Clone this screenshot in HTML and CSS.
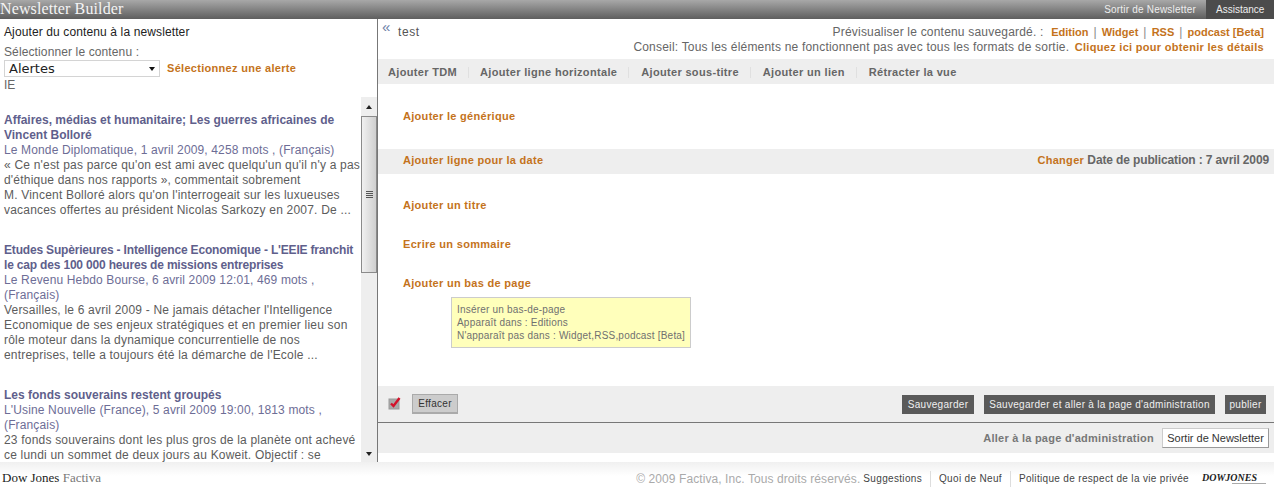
FILE: index.html
```html
<!DOCTYPE html>
<html lang="fr">
<head>
<meta charset="utf-8">
<title>Newsletter Builder</title>
<link rel="stylesheet" href="styles.css">
</head>
<body>
<header class="top">
  <div class="brand">Newsletter Builder</div>
  <nav class="top-nav"><a class="top-exit">Sortir de Newsletter</a><a class="top-help">Assistance</a></nav>
</header>
<main class="main">
  <aside class="left">
    <h1 class="left-title">Ajouter du contenu à la newsletter</h1>
    <div class="left-label">Sélectionner le contenu :</div>
    <div class="select-row">
      <div class="select"><span>Alertes</span><i class="arrow"></i></div>
      <a class="link">Sélectionnez une alerte</a>
    </div>
    <div class="ie">IE</div>
    <div class="list-wrap">
      <div class="list">
        <article class="art">
          <a class="art-title">Affaires, médias et humanitaire; Les guerres africaines de Vincent Bolloré</a>
          <div class="art-meta">Le Monde Diplomatique, 1 avril 2009, 4258 mots , (Français)</div>
          <p class="art-text">« Ce n'est pas parce qu'on est ami avec quelqu'un qu'il n'y a pas d'éthique dans nos rapports », commentait sobrement<br>M. Vincent Bolloré alors qu'on l'interrogeait sur les luxueuses vacances offertes au président Nicolas Sarkozy en 2007. De ...</p>
        </article>
        <article class="art">
          <a class="art-title tight">Etudes Supèrieures - Intelligence Economique - L'EEIE franchit le cap des 100 000 heures de missions entreprises</a>
          <div class="art-meta">Le Revenu Hebdo Bourse, 6 avril 2009 12:01, 469 mots , (Français)</div>
          <p class="art-text">Versailles, le 6 avril 2009 - Ne jamais détacher l'Intelligence Economique de ses enjeux stratégiques et en premier lieu son rôle moteur dans la dynamique concurrentielle de nos entreprises, telle a toujours été la démarche de l'Ecole ...</p>
        </article>
        <article class="art">
          <a class="art-title">Les fonds souverains restent groupés</a>
          <div class="art-meta">L'Usine Nouvelle (France), 5 avril 2009 19:00, 1813 mots , (Français)</div>
          <p class="art-text">23 fonds souverains dont les plus gros de la planète ont achevé ce lundi un sommet de deux jours au Koweit. Objectif : se</p>
        </article>
      </div>
      <div class="scrollbar">
        <div class="sb-btn"><i class="sb-up"></i></div>
        <div class="sb-track">
          <div class="sb-thumb"><i class="sb-grip"></i></div>
        </div>
        <div class="sb-btn sb-btn-end"><i class="sb-down"></i></div>
      </div>
    </div>
  </aside>
  <section class="right">
    <div class="head">
      <div class="head-left"><span class="collapse">«</span><span class="name">test</span></div>
      <div class="head-right">
        <div>Prévisualiser le contenu sauvegardé. : <span class="links"><a class="link">Edition</a><span class="pipe">|</span><a class="link">Widget</a><span class="pipe">|</span><a class="link">RSS</a><span class="pipe">|</span><a class="link">podcast [Beta]</a></span></div>
        <div>Conseil: Tous les éléments ne fonctionnent pas avec tous les formats de sortie. <a class="link tip">Cliquez ici pour obtenir les détails</a></div>
      </div>
    </div>
    <div class="toolbar">
      <a class="tool">Ajouter TDM</a>
      <a class="tool">Ajouter ligne horizontale</a>
      <a class="tool">Ajouter sous-titre</a>
      <a class="tool">Ajouter un lien</a>
      <a class="tool">Rétracter la vue</a>
    </div>
    <div class="canvas">
      <div class="sec sec-generic"><a class="link">Ajouter le générique</a></div>
      <div class="date-row">
        <a class="link">Ajouter ligne pour la date</a>
        <div class="date"><a class="link">Changer</a> Date de publication : 7 avril 2009</div>
      </div>
      <div class="sec sec-title"><a class="link">Ajouter un titre</a></div>
      <div class="sec"><a class="link">Ecrire un sommaire</a></div>
      <div class="sec"><a class="link">Ajouter un bas de page</a></div>
      <div class="tooltip">Insérer un bas-de-page<br>Apparaît dans : Editions<br>N'apparaît pas dans : Widget,RSS,podcast [Beta]</div>
    </div>
    <div class="actions">
      <svg class="check" width="14" height="14" viewBox="0 0 14 14"><rect x="1" y="3" width="10" height="10" fill="#a9a9a9" stroke="#999"/><path d="M3 7.5 L5.5 10 L11.5 2" fill="none" stroke="#d3122a" stroke-width="2.4"/></svg>
      <button class="btn-light" type="button">Effacer</button>
      <div class="actions-right">
        <button class="btn-dark btn-save" type="button">Sauvegarder</button>
        <button class="btn-dark btn-save-admin" type="button">Sauvegarder et aller à la page d'administration</button>
        <button class="btn-dark btn-publish" type="button">publier</button>
      </div>
    </div>
    <div class="admin">
      <a class="admin-link">Aller à la page d'administration</a>
      <button class="btn-white" type="button">Sortir de Newsletter</button>
    </div>
  </section>
</main>
<footer class="foot">
  <div class="foot-brand">Dow Jones <span>Factiva</span></div>
  <div class="foot-right">
    <span class="copy">© 2009 Factiva, Inc. Tous droits réservés.</span>
    <a class="foot-link">Suggestions</a><a class="foot-link sep">Quoi de Neuf</a><a class="foot-link sep">Politique de respect de la vie privée</a>
    <span class="dj">DOWJONES</span>
  </div>
</footer>
</body>
</html>
```
FILE: styles.css
```css
* { box-sizing: border-box; }
html, body { margin: 0; padding: 0; }
body { width: 1274px; height: 500px; overflow: hidden; background: #fff; font: 12px/15px "Liberation Sans", Arial, sans-serif; color: #666; }
a { text-decoration: none; }
p, h1 { margin: 0; font: inherit; }

.top { height: 19px; display: flex; justify-content: space-between; background: linear-gradient(#a8a8a8, #5e5e5e); }
.brand { font: 16px/17px "Liberation Serif", serif; color: #f4f4f4; letter-spacing: 0.12px; }
.top-nav { display: flex; font-size: 10px; line-height: 20px; color: #eee; }
.top-exit { padding-right: 10px; letter-spacing: 0.2px; }
.top-help { width: 68px; padding-left: 10px; background: #4c4c4c; }

.main { display: flex; height: 443px; }
.left { width: 378px; flex: none; border-right: 1px solid #777; display: flex; flex-direction: column; }
.left-title { color: #222; padding: 6px 0 0 4px; height: 25px; letter-spacing: 0.12px; }
.left-label { padding-left: 4px; height: 16px; line-height: 16px; letter-spacing: 0.12px; }
.select-row { display: flex; align-items: center; height: 17px; padding-left: 4px; }
.select { width: 156px; height: 17px; border: 1px solid #d4d4d4; display: flex; align-items: center; justify-content: space-between; padding: 0 4px; font: 13px/15px "DejaVu Sans", sans-serif; color: #222; }
.arrow { width: 0; height: 0; border: 3.5px solid transparent; border-top: 4px solid #111; border-bottom: 0; }
.link { color: #c4731c; font-weight: bold; font-size: 11px; letter-spacing: 0.3px; }
.select-row .link { margin-left: 7px; }
.ie { height: 20px; padding: 1px 0 0 4px; line-height: 14px; }
.list-wrap { flex: 1; min-height: 0; display: flex; }
.list { flex: 1; min-width: 0; overflow: hidden; padding: 16px 0 0 4px; }
.art { margin-bottom: 25px; width: 357px; }
.art-title { display: block; font-weight: bold; color: #5f5f8c; }
.tight { letter-spacing: -0.18px; }
.art-meta { color: #6d6d96; letter-spacing: 0.14px; }
.art-text { color: #5c5c5c; letter-spacing: 0.2px; }
.scrollbar { width: 16px; flex: none; display: flex; flex-direction: column; background: #eee; }
.sb-btn { height: 19px; flex: none; display: flex; align-items: center; justify-content: center; }
.sb-btn-end { height: 17px; }
.sb-up { border: 3.5px solid transparent; border-bottom: 4px solid #222; border-top: 0; }
.sb-down { border: 3.5px solid transparent; border-top: 4px solid #222; border-bottom: 0; }
.sb-track { flex: 1; }
.sb-thumb { height: 157px; border: 1px solid #8a8a8a; background: linear-gradient(90deg, #f0f0f0, #cfcfcf); display: flex; align-items: center; justify-content: center; }
.sb-grip { width: 7px; height: 8px; background: repeating-linear-gradient(#555 0 1px, transparent 1px 2px); }

.right { flex: 1; min-width: 0; display: flex; flex-direction: column; padding-bottom: 9px; }
.head { height: 40px; display: flex; justify-content: space-between; }
.head-left { display: flex; }
.collapse { color: #6d7fa8; font-size: 15px; line-height: 12px; padding: 2px 0 0 4px; width: 20px; }
.name { padding-top: 6px; color: #555; letter-spacing: 0.6px; }
.head-right { text-align: right; padding: 6px 10px 0 0; color: #666; letter-spacing: 0.2px; }
.links { margin-left: 4px; }
.links .link { letter-spacing: 0; }
.links .pipe { margin: 0 5px; color: #888; }
.tip { margin-left: 2px; }
.toolbar { height: 25px; background: #eee; display: flex; align-items: center; padding: 2px 0 0 10px; }
.tool { font-size: 11px; font-weight: bold; color: #666; padding-right: 11px; margin-right: 12px; border-right: 1px solid #e0e0e0; line-height: 11px; letter-spacing: 0.33px; }
.tool:first-child { margin-right: 11px; }
.tool:last-child { border: 0; }
.canvas { flex: 1; min-height: 0; position: relative; }
.sec { height: 39px; padding: 13px 0 0 25px; }
.sec-generic { height: 65px; padding-top: 25px; }
.sec-title { padding-top: 24px; height: 50px; }
.date-row { height: 25px; background: #eee; display: flex; justify-content: space-between; align-items: center; padding: 0 5px 2px 25px; }
.date { font-weight: bold; font-size: 12px; color: #666; letter-spacing: -0.13px; }
.tooltip { position: absolute; left: 73px; top: 213px; width: 240px; height: 51px; background: #ffffbb; border: 1px solid #ccc; padding: 5px 0 5px 5px; font-size: 10px; line-height: 13px; color: #707070; letter-spacing: 0.2px; }
.actions { height: 37px; background: #eee; border-bottom: 1px solid #777; display: flex; align-items: center; padding: 0 8px 0 10px; }
.check { flex: none; margin-top: -3px; }
.btn-light { margin-left: 10px; height: 20px; width: 46px; padding: 0; border: 1px solid #aaa; border-width: 1px 1px 2px 1px; background: #ccc; font: 10px/16px "Liberation Sans", sans-serif; color: #333; letter-spacing: 0.3px; }
.actions-right { margin-left: auto; display: flex; gap: 10px; }
.btn-dark { height: 19px; padding: 0; border: 0; background: #5a5a5a; color: #f0f0f0; font: 10px/19px "Liberation Sans", sans-serif; letter-spacing: 0.3px; }
.btn-save { width: 72px; }
.btn-save-admin { width: 231px; }
.btn-publish { width: 41px; }
.admin { height: 30px; background: #eee; display: flex; align-items: center; justify-content: flex-end; padding: 0 5px 0 0; }
.admin-link { font-size: 11px; font-weight: bold; color: #777; margin-right: 8px; letter-spacing: 0.25px; }
.btn-white { height: 20px; width: 107px; padding: 0; border: 1px solid #ccc; border-bottom-color: #999; border-right-color: #999; background: #fff; color: #333; font: 11px/18px "Liberation Sans", sans-serif; }

.foot { height: 38px; display: flex; justify-content: space-between; background: linear-gradient(#f0f0f0, #fff 14px); }
.foot-brand { font: 13px/32px "Liberation Serif", serif; color: #222; padding-left: 2px; }
.foot-brand span { color: #777; }
.foot-right { display: flex; align-items: flex-start; padding: 9px 8px 0 0; line-height: 16px; }
.copy { color: #aaa; font-size: 12px; margin-right: 3px; letter-spacing: 0.08px; }
.foot-link { font-size: 10px; color: #444; letter-spacing: 0.33px; }
.sep { margin-left: 8px; padding-left: 8px; border-left: 1px solid #ddd; }
.dj { position: relative; font: italic bold 10px/14px "Liberation Serif", serif; color: #222; margin-left: 13px; width: 64px; }
.dj::after { content: ""; position: absolute; left: 30px; right: 0; top: 12px; height: 1px; background: #aaa; }
```
